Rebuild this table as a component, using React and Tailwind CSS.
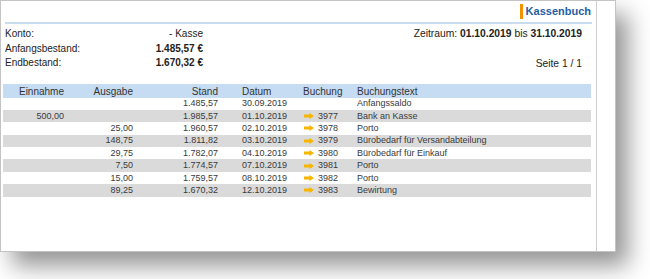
const rows = [
  { ein: '', aus: '', stand: '1.485,57', datum: '30.09.2019', nr: '', text: 'Anfangssaldo' },
  { ein: '500,00', aus: '', stand: '1.985,57', datum: '01.10.2019', nr: '3977', text: 'Bank an Kasse' },
  { ein: '', aus: '25,00', stand: '1.960,57', datum: '02.10.2019', nr: '3978', text: 'Porto' },
  { ein: '', aus: '148,75', stand: '1.811,82', datum: '03.10.2019', nr: '3979', text: 'Bürobedarf für Versandabteilung' },
  { ein: '', aus: '29,75', stand: '1.782,07', datum: '04.10.2019', nr: '3980', text: 'Bürobedarf für Einkauf' },
  { ein: '', aus: '7,50', stand: '1.774,57', datum: '07.10.2019', nr: '3981', text: 'Porto' },
  { ein: '', aus: '15,00', stand: '1.759,57', datum: '08.10.2019', nr: '3982', text: 'Porto' },
  { ein: '', aus: '89,25', stand: '1.670,32', datum: '12.10.2019', nr: '3983', text: 'Bewirtung' },
];

const Arrow = () => (
  <svg width="10" height="6" viewBox="0 0 10 6" className="shrink-0">
    <path d="M0 1.5 H5.5 V0 L10 3 L5.5 6 V4.5 H0 Z" fill="#f7b500" />
  </svg>
);

const cols = 'grid grid-cols-[61px_69px_85px_84px_55px_1fr]';

const App = () => {
  return (
    <div className="w-[650px] h-[279px] bg-white overflow-hidden font-['Liberation_Sans',Arial,sans-serif] text-[#333]">
      <div className="w-[616px] h-[252px] bg-white border border-[#c4c4c4] shadow-[12px_14px_22px_rgba(0,0,0,0.42)] flex">
        <div className="w-[596px] h-full border-r border-[#cfcfcf] flex flex-col">
          {/* Header */}
          <div className="h-[23px] ml-[4px] mr-[4px] border-b-2 border-[#c9dcf0] flex items-center justify-end pr-[1px]">
            <div className="w-[3px] h-[15px] bg-[#f39200] mr-[3px]" />
            <span className="text-[11px] font-bold text-[#2460a4]">Kassenbuch</span>
          </div>

          {/* Info */}
          <div className="flex justify-between mt-[3px] ml-[4px] mr-[14px] text-[10px] leading-[14.5px] text-[#222]">
            <div className="w-[198px]">
              <div className="flex justify-between">
                <span>Konto:</span>
                <span>- Kasse</span>
              </div>
              <div className="flex justify-between">
                <span>Anfangsbestand:</span>
                <span className="font-bold">1.485,57 €</span>
              </div>
              <div className="flex justify-between">
                <span>Endbestand:</span>
                <span className="font-bold">1.670,32 €</span>
              </div>
            </div>
            <div className="flex flex-col items-end text-[10.3px]">
              <div>
                Zeitraum: <span className="font-bold">01.10.2019</span> bis <span className="font-bold">31.10.2019</span>
              </div>
              <div className="h-[14.5px]" />
              <div className="mt-[1px]">Seite 1 / 1</div>
            </div>
          </div>

          {/* Table */}
          <div className="ml-[2px] w-[588px] mt-[12px]">
            <div className={`${cols} h-[14px] items-center bg-[#c6dcf3] text-[10px] text-[#333]`}>
              <span className="text-right">Einnahme</span>
              <span className="text-right">Ausgabe</span>
              <span className="text-right">Stand</span>
              <span className="pl-[24px]">Datum</span>
              <span className="pl-[1px]">Buchung</span>
              <span>Buchungstext</span>
            </div>
            {rows.map((r, i) => (
              <div
                key={i}
                className={`${cols} h-[12.4px] items-center text-[9px] leading-none text-[#3a3a3a] ${i % 2 === 1 ? 'bg-[#dadada]' : 'bg-white'}`}
              >
                <span className="text-right">{r.ein}</span>
                <span className="text-right">{r.aus}</span>
                <span className="text-right">{r.stand}</span>
                <span className="pl-[24px]">{r.datum}</span>
                <span className="flex items-center gap-[4px] pl-[2px]">
                  {r.nr && <Arrow />}
                  {r.nr}
                </span>
                <span>{r.text}</span>
              </div>
            ))}
          </div>
        </div>
      </div>
    </div>
  );
};

export default App;
